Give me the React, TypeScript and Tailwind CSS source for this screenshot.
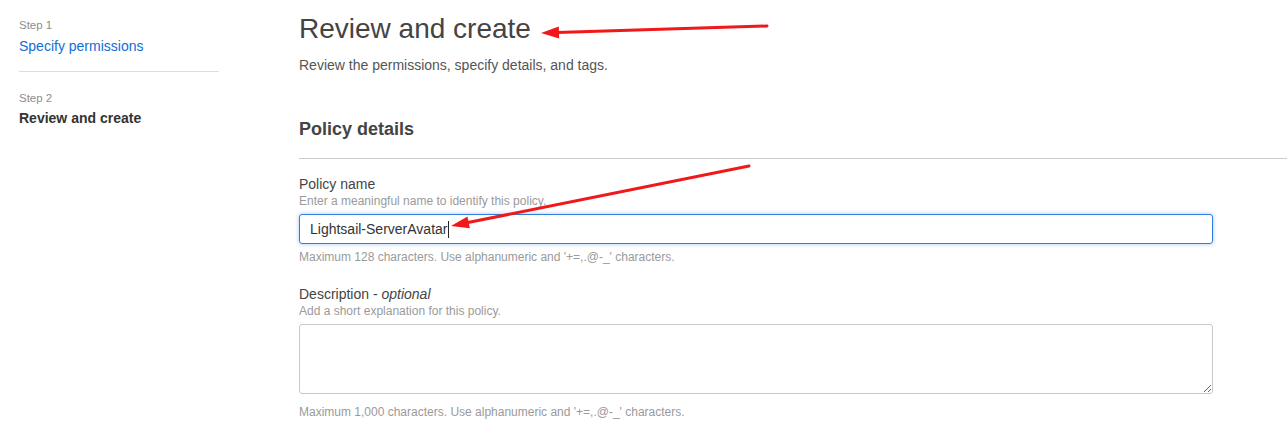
import React from "react";

const Arrow = ({ x1, y1, x2, y2 }: { x1: number; y1: number; x2: number; y2: number }) => {
  // tip sits at x2,y2
  const dx = x2 - x1;
  const dy = y2 - y1;
  const len = Math.hypot(dx, dy);
  const ux = dx / len;
  const uy = dy / len;
  const hl = 18;
  const hw = 6;
  const bx = x2 - ux * hl;
  const by = y2 - uy * hl;
  const p1 = `${bx - uy * hw},${by + ux * hw}`;
  const p2 = `${bx + uy * hw},${by - ux * hw}`;
  return (
    <g>
      <line x1={x1} y1={y1} x2={bx + ux * 2} y2={by + uy * 2} stroke="#f01818" strokeWidth={3} strokeLinecap="round" />
      <polygon points={`${x2},${y2} ${p1} ${p2}`} fill="#f01818" />
    </g>
  );
};

export default function App() {
  return (
    <div className="relative h-[445px] w-[1287px] overflow-hidden bg-white font-['Liberation_Sans',Arial,sans-serif] text-[#444]">
      <div className="flex">
        <aside className="w-[219px] shrink-0 pl-[19px] pt-[18px]">
          <div className="text-[11.5px] leading-[14px] text-[#8d8d8d]">Step 1</div>
          <div className="mt-[5px] text-[14px] leading-[18px] text-[#0f6fd5]">Specify permissions</div>
          <div className="mt-[16px] border-t border-[#dddddd]" />
          <div className="mt-[19px] text-[11.5px] leading-[14px] text-[#8d8d8d]">Step 2</div>
          <div className="mt-[4px] text-[14px] font-bold leading-[18px] text-[#333]">Review and create</div>
        </aside>

        <main className="ml-[80px] flex-1">
          <h1 className="mt-[13px] text-[28px] leading-[32px] text-[#444]">Review and create</h1>
          <p className="mt-[12px] text-[14px] leading-[16px] text-[#555]">
            Review the permissions, specify details, and tags.
          </p>

          <h2 className="mt-[45px] text-[18px] font-bold leading-[22px] text-[#444]">Policy details</h2>
          <div className="mt-[18px] border-t border-[#cccccc]" />

          <div className="w-[914px]">
            <div className="mt-[17px] text-[14px] leading-[17px] text-[#444]">Policy name</div>
            <div className="mt-[1px] text-[12px] leading-[14px] text-[#9a9a9a]">
              Enter a meaningful name to identify this policy.
            </div>
            <div className="mt-[6px] flex h-[30px] items-center rounded-[3px] border border-[#2e7ee0] px-[10px] text-[14px] text-[#333] shadow-[0_0_4px_rgba(46,126,224,0.45)]">
              Lightsail-ServerAvatar
              <span className="ml-[1px] inline-block h-[17px] w-px bg-[#222]" />
            </div>
            <div className="mt-[6px] text-[12px] leading-[14px] text-[#9a9a9a]">
              Maximum 128 characters. Use alphanumeric and '+=,.@-_' characters.
            </div>

            <div className="mt-[22px] text-[14px] leading-[17px] text-[#444]">
              Description - <span className="italic">optional</span>
            </div>
            <div className="mt-[1px] text-[12px] leading-[14px] text-[#9a9a9a]">Add a short explanation for this policy.</div>
            <textarea
              className="mt-[6px] block h-[70px] w-full resize-y rounded-[3px] border border-[#c8c8c8] px-[10px] py-[6px] text-[14px] outline-none"
              defaultValue=""
            />
            <div className="mt-[11px] text-[12px] leading-[14px] text-[#9a9a9a]">
              Maximum 1,000 characters. Use alphanumeric and '+=,.@-_' characters.
            </div>
          </div>
        </main>
      </div>

      <svg className="pointer-events-none absolute left-0 top-0" width={1287} height={445}>
        <Arrow x1={767} y1={26} x2={541} y2={33} />
        <Arrow x1={749} y1={166} x2={451} y2={226} />
      </svg>
    </div>
  );
}
